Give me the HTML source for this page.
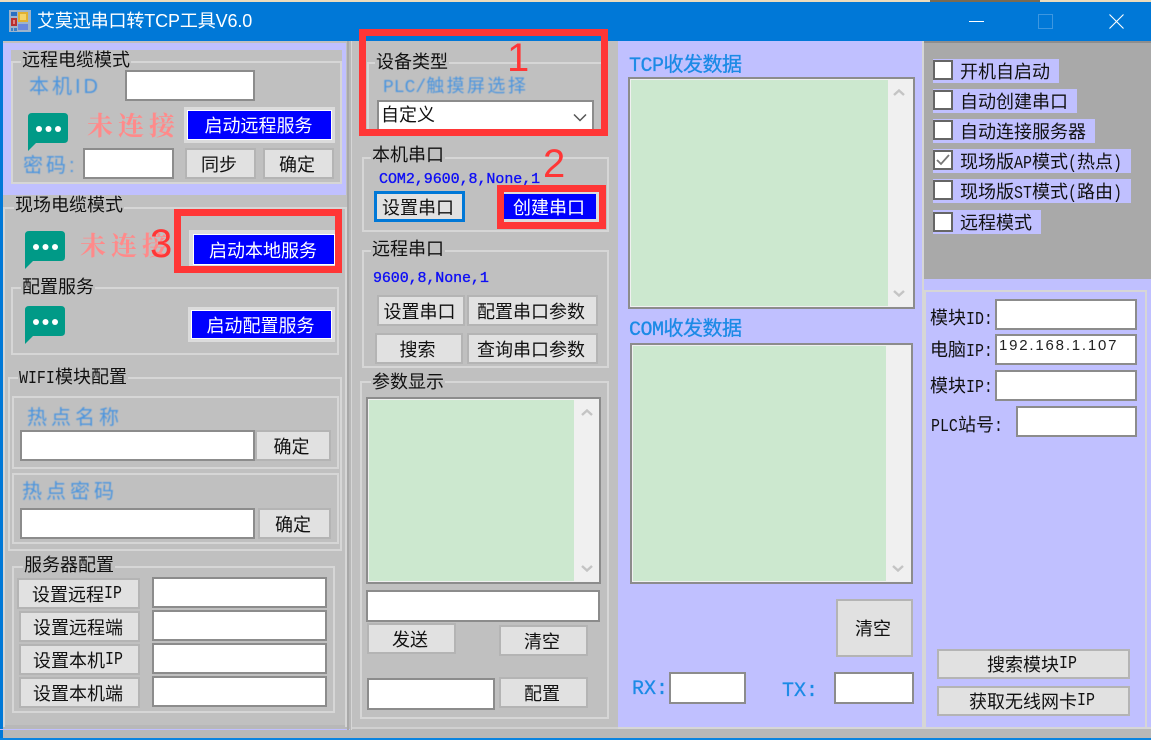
<!DOCTYPE html>
<html><head><meta charset="utf-8">
<style>
html,body{margin:0;padding:0;width:1151px;height:741px;overflow:hidden;background:#fff}
body{position:relative;font-family:"Liberation Sans","WenQuanYi Zen Hei","Noto Sans CJK SC",sans-serif;color:#111}
div,svg{position:absolute;box-sizing:border-box}
.f{background:#c0c0c0}
.g{border:2px solid #d6d6d6}
.t{font-size:18px;line-height:20px;height:20px;white-space:nowrap;background:#c0c0c0;padding:0 1px;filter:blur(.3px)}
.n{font-size:18px;line-height:20px;height:20px;white-space:nowrap;filter:blur(.3px)}
.bl{color:#4a94de;font-size:20px;line-height:22px;height:22px;white-space:nowrap;filter:blur(.4px)}
.tb{color:#1b8ae6;font-size:20px;line-height:22px;height:22px;white-space:nowrap;font-family:"Liberation Mono","WenQuanYi Zen Hei",monospace;filter:blur(.3px);-webkit-text-stroke:.3px #1b8ae6}
.i{background:#fff;border:2px solid #8c8c8c}
.b{background:#e1e1e1;border:2px solid #b4b4b4;font-size:18px;display:flex;align-items:center;justify-content:center;white-space:nowrap;color:#111;padding-right:3px;filter:blur(.25px)}
.bu{background:#0000ff;color:#fff;font-size:18px;display:flex;align-items:center;justify-content:center;white-space:nowrap;border:1px solid #fff;padding-right:2px}
.o{background:#dcdcdc}
.r{border-style:solid;border-color:#ff3636}
.num{color:#ff3636;font-size:40px;line-height:40px;font-family:"Liberation Sans",sans-serif}
.red{color:#ff8a8a;font-size:26px;line-height:28px;letter-spacing:5px;white-space:nowrap;font-family:"Noto Serif CJK SC","WenQuanYi Zen Hei",serif;font-weight:700;filter:blur(.3px)}
.mono{color:#0f0ff5;font:15px/16px "Liberation Mono",monospace;white-space:nowrap;-webkit-text-stroke:.35px #0f0ff5}
.ta{background:#f0f0f0;border:2px solid #8c8c8c}
.ta>div{left:1px;top:1px;bottom:1px;background:#cce8cf}
.c{background:#fff;border:2px solid #666;width:20px;height:20px}
.l{background:#c0c0ff}
.m{font-size:18px;line-height:26px;height:24px;white-space:nowrap;padding-left:27px;filter:blur(.3px)}
.s{display:inline-block;font-family:"Liberation Mono",monospace;font-size:18px;line-height:18px;transform:scaleX(.83);transform-origin:0 50%}
.s1{margin-right:-1.8px}.s2{margin-right:-3.6px}.s3{margin-right:-5.4px}.s4{margin-right:-7.2px}
.u{font-family:"Liberation Mono",monospace;letter-spacing:0}
</style></head><body>

<!-- window frame -->
<div style="left:0;top:0;width:1151px;height:2px;background:#ecdcbc"></div>
<div style="left:930px;top:0;width:110px;height:2px;background:#7a6a50"></div>
<div style="left:0;top:2px;width:1151px;height:39px;background:#0078d7"></div>
<div style="left:0;top:41px;width:1151px;height:697px;background:#b8b8b8"></div>
<div style="left:0;top:2px;width:3px;height:736px;background:#0078d7"></div>
<div style="left:0;top:738px;width:1151px;height:2px;background:#0a84e0"></div>
<div style="left:0;top:729px;width:350px;height:1px;background:#c0c0ff"></div>

<!-- title bar -->
<svg style="left:9px;top:10px;filter:blur(.35px)" width="22" height="22" viewBox="0 0 22 22">
<rect x="0" y="0" width="22" height="22" fill="#9db4cc"/>
<rect x="2" y="2" width="6" height="4" fill="#2a70c0"/>
<rect x="9" y="2" width="10" height="10" fill="#e0b030"/><rect x="11" y="4" width="6" height="6" fill="#f4d468"/>
<rect x="2" y="8" width="6" height="8" fill="#b83030"/><rect x="4" y="10" width="2" height="4" fill="#e08080"/>
<rect x="9" y="14" width="10" height="6" fill="#6a88dc"/>
<rect x="2" y="18" width="2" height="3" fill="#3a80c8"/><rect x="5" y="18" width="3" height="3" fill="#3a80c8"/>
</svg>
<div style="left:37px;top:10px;font-size:18px;line-height:22px;color:#fff;white-space:nowrap;letter-spacing:-.13px">艾莫迅串口转TCP工具V6.0</div>
<div style="left:969px;top:21px;width:15px;height:1px;background:#fff"></div>
<div style="left:1038px;top:14px;width:15px;height:15px;border:1px solid #3d97e0"></div>
<svg style="left:1109px;top:14px" width="15" height="15" viewBox="0 0 15 15"><path d="M0.5 0.5L14.5 14.5M14.5 0.5L0.5 14.5" stroke="#fff" stroke-width="1.1" fill="none"/></svg>

<!-- LEFT COLUMN -->
<div class="f" style="left:3px;top:41px;width:344px;height:684px"></div>
<div class="l" style="left:3px;top:43px;width:343px;height:152px"></div>
<div class="f" style="left:11px;top:50px;width:331px;height:134px"></div>
<div class="g" style="left:11px;top:61px;width:331px;height:123px"></div>
<div class="t" style="left:21px;top:50px">远程电缆模式</div>
<div class="bl" style="left:29px;top:76px;letter-spacing:3px">本机ID</div>
<div class="i" style="left:125px;top:70px;width:130px;height:31px"></div>
<svg style="left:28px;top:113px" width="40" height="38" viewBox="0 0 40 38"><path d="M0 4Q0 0 4 0H36Q40 0 40 4V26Q40 30 36 30H8L0 38Z" fill="#009a87"/><circle cx="11" cy="16" r="3" fill="#fff"/><circle cx="20.500" cy="16" r="3" fill="#fff"/><circle cx="30" cy="16" r="3" fill="#fff"/></svg>
<div class="red" style="left:87px;top:111px">未连接</div>
<div class="o" style="left:184px;top:107px;width:151px;height:36px"></div>
<div class="bu" style="left:187px;top:110px;width:145px;height:30px">启动远程服务</div>
<div class="bl" style="left:23px;top:155px;letter-spacing:3px">密码:</div>
<div class="i" style="left:83px;top:148px;width:91px;height:31px"></div>
<div class="b" style="left:185px;top:148px;width:71px;height:31px">同步</div>
<div class="b" style="left:263px;top:148px;width:71px;height:31px">确定</div>

<div class="g" style="left:3px;top:207px;width:344px;height:520px;border-bottom:0"></div>
<div class="t" style="left:14px;top:195px">现场电缆模式</div>
<svg style="left:25px;top:231px" width="40" height="38" viewBox="0 0 40 38"><path d="M0 4Q0 0 4 0H36Q40 0 40 4V26Q40 30 36 30H8L0 38Z" fill="#009a87"/><circle cx="11" cy="16" r="3" fill="#fff"/><circle cx="20.500" cy="16" r="3" fill="#fff"/><circle cx="30" cy="16" r="3" fill="#fff"/></svg>
<div class="red" style="left:80px;top:231px">未连接</div>
<div class="o" style="left:189px;top:230px;width:146px;height:37px"></div>
<div class="bu" style="left:193px;top:234px;width:142px;height:31px">启动本地服务</div>
<div class="r" style="left:174px;top:209px;width:168px;height:64px;border-width:7px"></div>
<div class="num" style="left:150px;top:224px">3</div>

<div class="g" style="left:11px;top:287px;width:328px;height:68px"></div>
<div class="t" style="left:21px;top:277px">配置服务</div>
<svg style="left:25px;top:306px" width="40" height="38" viewBox="0 0 40 38"><path d="M0 4Q0 0 4 0H36Q40 0 40 4V26Q40 30 36 30H8L0 38Z" fill="#009a87"/><circle cx="11" cy="16" r="3" fill="#fff"/><circle cx="20.500" cy="16" r="3" fill="#fff"/><circle cx="30" cy="16" r="3" fill="#fff"/></svg>
<div class="o" style="left:188px;top:307px;width:147px;height:35px"></div>
<div class="bu" style="left:191px;top:310px;width:141px;height:29px">启动配置服务</div>

<div class="g" style="left:8px;top:377px;width:334px;height:174px"></div>
<div class="t" style="left:18px;top:367px"><span class="s s4">WIFI</span>模块配置</div>
<div class="g" style="left:12px;top:396px;width:327px;height:73px"></div>
<div class="bl" style="left:27px;top:407px;letter-spacing:4px">热点名称</div>
<div class="i" style="left:20px;top:430px;width:235px;height:31px"></div>
<div class="b" style="left:255px;top:430px;width:76px;height:31px">确定</div>
<div class="g" style="left:12px;top:473px;width:327px;height:71px"></div>
<div class="bl" style="left:22px;top:481px;letter-spacing:4px">热点密码</div>
<div class="i" style="left:20px;top:508px;width:235px;height:31px"></div>
<div class="b" style="left:258px;top:508px;width:73px;height:31px">确定</div>

<div class="g" style="left:12px;top:566px;width:323px;height:147px"></div>
<div class="t" style="left:23px;top:555px">服务器配置</div>
<div class="b" style="left:17px;top:578px;width:123px;height:31px">设置远程<span class="s s2">IP</span></div>
<div class="b" style="left:19px;top:611px;width:121px;height:31px">设置远程端</div>
<div class="b" style="left:19px;top:644px;width:121px;height:31px">设置本机<span class="s s2">IP</span></div>
<div class="b" style="left:19px;top:677px;width:121px;height:31px">设置本机端</div>
<div class="i" style="left:152px;top:577px;width:175px;height:31px"></div>
<div class="i" style="left:152px;top:610px;width:175px;height:31px"></div>
<div class="i" style="left:152px;top:643px;width:175px;height:31px"></div>
<div class="i" style="left:152px;top:676px;width:175px;height:31px"></div>

<!-- MIDDLE COLUMN -->
<div class="f" style="left:352px;top:41px;width:266px;height:686px"></div>
<div style="left:347px;top:41px;width:2px;height:689px;background:#a8a8a8"></div>
<div style="left:351px;top:41px;width:1px;height:689px;background:#d6d6d6"></div>
<div style="left:352px;top:727px;width:266px;height:2px;background:#d0d0d0"></div>

<div class="g" style="left:367px;top:62px;width:237px;height:70px;border-bottom:0"></div>
<div class="t" style="left:375px;top:52px">设备类型</div>
<div class="bl" style="left:383px;top:75px;font-size:18px;letter-spacing:2.4px"><span class="u">PLC/</span>触摸屏选择</div>
<div class="i" style="left:377px;top:100px;width:217px;height:36px"></div>
<div class="n" style="left:381px;top:105px">自定义</div>
<svg style="left:573px;top:113px" width="14" height="9" viewBox="0 0 14 9"><path d="M1 1.500L7 7.500L13 1.500" stroke="#555" stroke-width="1.500" fill="none"/></svg>
<div class="r" style="left:359px;top:29px;width:249px;height:107px;border-width:7px"></div>
<div class="num" style="left:507px;top:38px">1</div>

<div class="g" style="left:362px;top:157px;width:247px;height:75px"></div>
<div class="t" style="left:371px;top:145px">本机串口</div>
<div class="mono" style="left:379px;top:172px;letter-spacing:-.05px">COM2,9600,8,None,1</div>
<div class="b" style="left:374px;top:191px;width:91px;height:31px;border:3px solid #0078d7">设置串口</div>
<div class="o" style="left:504px;top:192px;width:95px;height:30px"></div>
<div class="bu" style="left:504px;top:194px;width:92px;height:25px;border:0">创建串口</div>
<div class="r" style="left:497px;top:185px;width:109px;height:44px;border-width:7px"></div>
<div class="num" style="left:543px;top:144px">2</div>

<div class="g" style="left:362px;top:250px;width:247px;height:118px"></div>
<div class="t" style="left:371px;top:239px">远程串口</div>
<div class="mono" style="left:373px;top:271px;letter-spacing:-.1px">9600,8,None,1</div>
<div class="b" style="left:377px;top:295px;width:88px;height:31px">设置串口</div>
<div class="b" style="left:467px;top:295px;width:131px;height:31px">配置串口参数</div>
<div class="b" style="left:375px;top:333px;width:88px;height:31px">搜索</div>
<div class="b" style="left:467px;top:333px;width:131px;height:31px">查询串口参数</div>

<div class="g" style="left:360px;top:381px;width:249px;height:338px"></div>
<div class="t" style="left:371px;top:372px">参数显示</div>
<div class="ta" style="left:366px;top:397px;width:235px;height:187px"><div style="width:205px"></div></div>
<svg style="left:580px;top:408px" width="14" height="9" viewBox="0 0 14 9"><path d="M2 7L7 2.500L12 7" stroke="#c4c4c4" stroke-width="2.400" fill="none"/></svg>
<svg style="left:580px;top:564px" width="14" height="9" viewBox="0 0 14 9"><path d="M2 2L7 6.500L12 2" stroke="#c4c4c4" stroke-width="2.400" fill="none"/></svg>
<div class="i" style="left:366px;top:590px;width:234px;height:32px"></div>
<div class="b" style="left:367px;top:623px;width:89px;height:31px">发送</div>
<div class="b" style="left:499px;top:625px;width:89px;height:31px">清空</div>
<div class="i" style="left:367px;top:678px;width:128px;height:32px"></div>
<div class="b" style="left:499px;top:677px;width:89px;height:31px">配置</div>

<!-- TCP COLUMN -->
<div class="l" style="left:618px;top:41px;width:304px;height:686px"></div>
<div style="left:618px;top:727px;width:306px;height:2px;background:#d6d6d6"></div>
<div style="left:922px;top:41px;width:2px;height:688px;background:#d6d6d6"></div>
<div class="tb" style="left:629px;top:56px;letter-spacing:-.5px">TCP收发数据</div>
<div class="ta" style="left:628px;top:77px;width:287px;height:232px"><div style="width:257px"></div></div>
<svg style="left:892px;top:88px" width="14" height="9" viewBox="0 0 14 9"><path d="M2 7L7 2.500L12 7" stroke="#c4c4c4" stroke-width="2.400" fill="none"/></svg>
<svg style="left:892px;top:289px" width="14" height="9" viewBox="0 0 14 9"><path d="M2 2L7 6.500L12 2" stroke="#c4c4c4" stroke-width="2.400" fill="none"/></svg>
<div class="tb" style="left:629px;top:320px;letter-spacing:-.5px">COM收发数据</div>
<div class="ta" style="left:630px;top:343px;width:283px;height:241px"><div style="width:253px"></div></div>
<svg style="left:891px;top:564px" width="14" height="9" viewBox="0 0 14 9"><path d="M2 2L7 6.500L12 2" stroke="#c4c4c4" stroke-width="2.400" fill="none"/></svg>
<div class="b" style="left:836px;top:599px;width:77px;height:58px">清空</div>
<div class="tb" style="left:632px;top:679px;font-size:20px">RX:</div>
<div class="i" style="left:669px;top:672px;width:77px;height:32px"></div>
<div class="tb" style="left:782px;top:681px;font-size:20px">TX:</div>
<div class="i" style="left:834px;top:672px;width:80px;height:32px"></div>

<!-- RIGHT COLUMN -->
<div style="left:924px;top:41px;width:227px;height:238px;background:#a9a9a9"></div>
<div style="left:924px;top:41px;width:227px;height:2px;background:#8e8e8e"></div>
<div class="l" style="left:924px;top:279px;width:227px;height:448px"></div>
<div style="left:924px;top:727px;width:227px;height:2px;background:#d6d6d6"></div>
<div style="left:924px;top:290px;width:223px;height:439px;border:2px solid #d6d6d6;border-bottom:0"></div>

<div class="l m" style="left:933px;top:59px;width:126px">开机自启动</div>
<div class="c" style="left:933px;top:60px"></div>
<div class="l m" style="left:933px;top:89px;width:144px">自动创建串口</div>
<div class="c" style="left:933px;top:90px"></div>
<div class="l m" style="left:933px;top:119px;width:162px">自动连接服务器</div>
<div class="c" style="left:933px;top:120px"></div>
<div class="l m" style="left:933px;top:149px;width:198px">现场版<span class="s s2">AP</span>模式<span class="s s1">(</span>热点<span class="s s1">)</span></div>
<div class="c" style="left:933px;top:150px"></div>
<svg style="left:935px;top:152px" width="16" height="16" viewBox="0 0 16 16"><path d="M2 8L6 12L14 3" stroke="#777" stroke-width="1.800" fill="none"/></svg>
<div class="l m" style="left:933px;top:179px;width:198px">现场版<span class="s s2">ST</span>模式<span class="s s1">(</span>路由<span class="s s1">)</span></div>
<div class="c" style="left:933px;top:180px"></div>
<div class="l m" style="left:933px;top:210px;width:108px">远程模式</div>
<div class="c" style="left:933px;top:212px"></div>

<div class="n" style="left:930px;top:308px">模块<span class="s s3">ID:</span></div>
<div class="i" style="left:995px;top:299px;width:142px;height:31px"></div>
<div class="n" style="left:930px;top:340px">电脑<span class="s s3">IP:</span></div>
<div class="i" style="left:995px;top:334px;width:142px;height:31px"></div>
<div style="left:999px;top:337px;font-size:15px;line-height:18px;letter-spacing:1.800px;white-space:nowrap;color:#222">192.168.1.107</div>
<div class="n" style="left:930px;top:376px">模块<span class="s s3">IP:</span></div>
<div class="i" style="left:995px;top:370px;width:142px;height:31px"></div>
<div class="n" style="left:931px;top:415px"><span class="s s3">PLC</span>站号<span class="s s1">:</span></div>
<div class="i" style="left:1016px;top:406px;width:121px;height:31px"></div>
<div class="b" style="left:937px;top:649px;width:193px;height:30px">搜索模块<span class="s s2">IP</span></div>
<div class="b" style="left:937px;top:686px;width:193px;height:30px">获取无线网卡<span class="s s2">IP</span></div>

</body></html>
